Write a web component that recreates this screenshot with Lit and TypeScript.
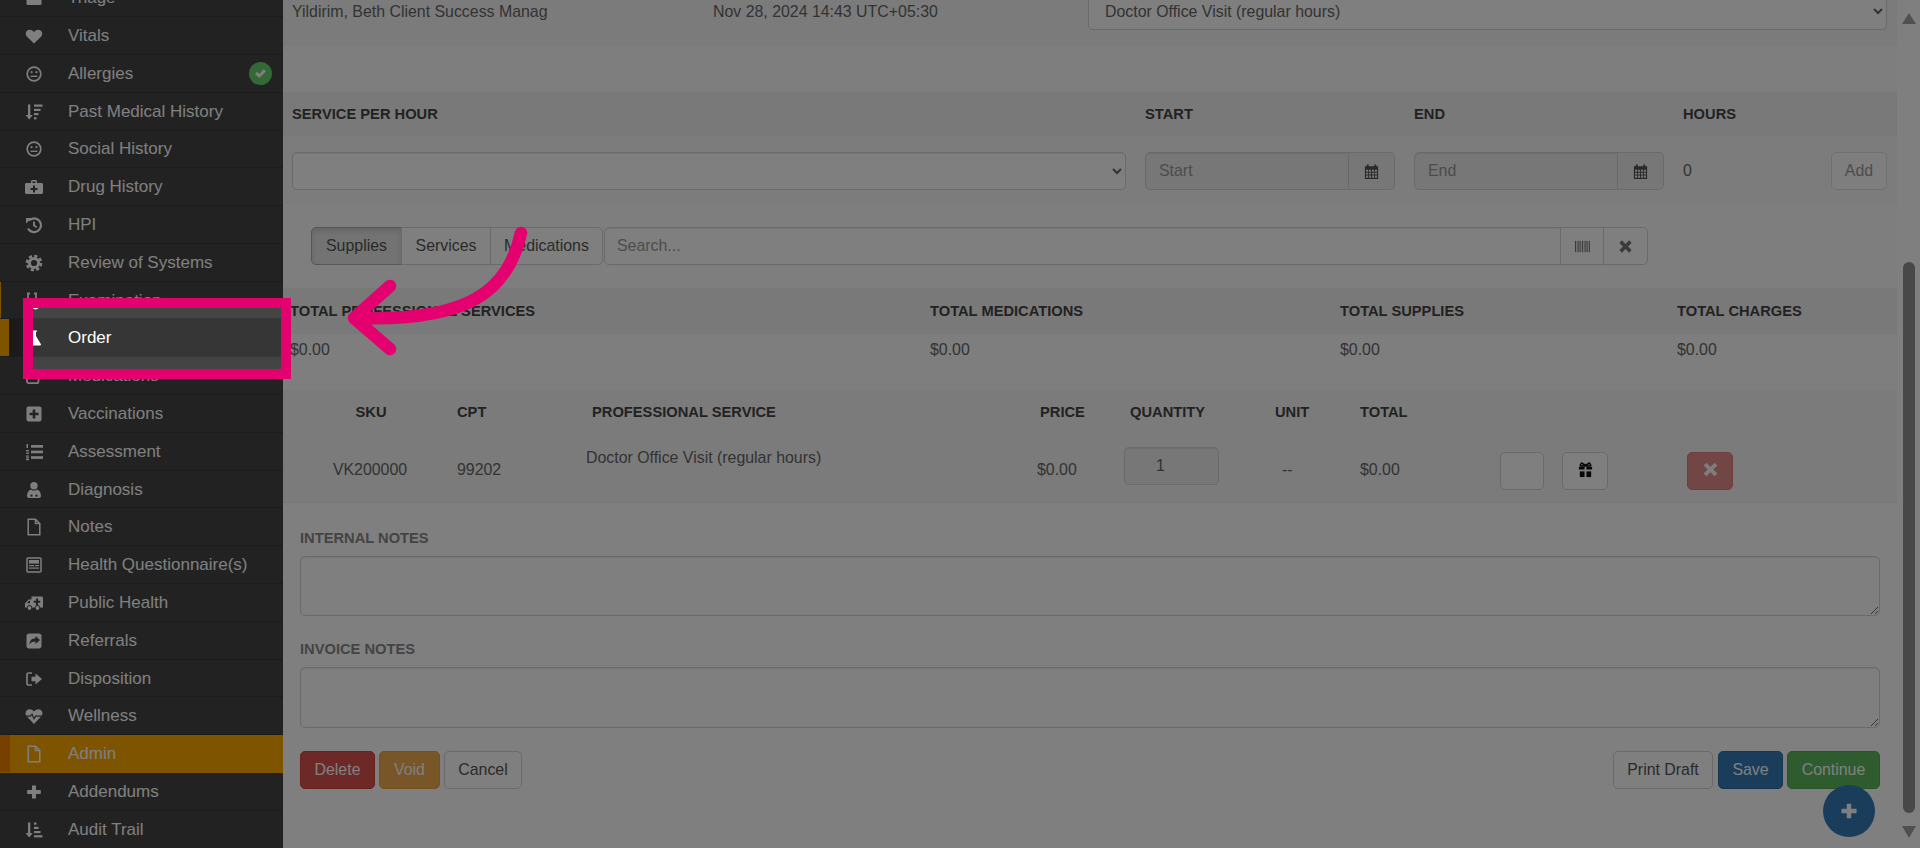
import { LitElement, html, css, svg } from 'lit';
import { customElement } from 'lit/decorators.js';

const ic = (body: unknown, size = 18) =>
    html`<svg class="ic" width="${size}" height="${size}" viewBox="0 0 18 18" fill="currentColor">${body}</svg>`;

const face = svg`<circle cx="9" cy="9" r="6.8" fill="none" stroke="currentColor" stroke-width="1.7"/><circle cx="6.6" cy="7.2" r="1.1"/><circle cx="11.4" cy="7.2" r="1.1"/><rect x="5.6" y="10.6" width="6.8" height="1.4"/>`;
const fileO = svg`<path d="M3.2 1.200h7.300l4.300 4.300v11.300H3.200Z M10.500 1.200v4.300h4.300" fill="none" stroke="currentColor" stroke-width="1.500"/>`;

const icons: Record<string, unknown> = {
    triage: svg`<rect x="1.500" y="4" width="15" height="12" rx="1.500"/>`,
    heart: svg`<path d="M9 16.500 2 9.700C.1 7.800.4 4.900 2.300 3.500 4.200 2.100 6.900 2.600 9 5c2.100-2.400 4.800-2.900 6.700-1.500 1.900 1.400 2.200 4.300.3 6.200Z"/>`,
    face,
    sortDesc: svg`<path d="M3 1.500h2.300v10.500h2.500l-3.600 4.500L.6 12H3Z"/><rect x="9" y="1.500" width="8.500" height="2.200"/><rect x="9" y="5.800" width="6.500" height="2.200"/><rect x="9" y="10" width="4.500" height="2.200"/><rect x="9" y="14.200" width="2.500" height="2.200"/>`,
    medkit: svg`<path fill-rule="evenodd" d="M6 5V3.500C6 2.700 6.700 2 7.500 2h3c.8 0 1.500.7 1.500 1.500V5h4.500c.8 0 1.500.7 1.500 1.500v8c0 .8-.7 1.500-1.500 1.500h-15C.7 16 0 15.300 0 14.500v-8C0 5.700.7 5 1.500 5ZM7.500 3.500V5h3V3.500ZM8 7.500V10H5.500v2H8v2.500h2V12h2.500v-2H10V7.500Z"/>`,
    history: svg`<path d="M4 4.500A6.900 6.900 0 1 1 3 12.500" fill="none" stroke="currentColor" stroke-width="2.200"/><path d="M1 2h5.500L1 7.500Z"/><path d="M9 5.500v4l2.700 1.700" fill="none" stroke="currentColor" stroke-width="1.900"/>`,
    cog: svg`<circle cx="9" cy="9" r="4.600" fill="none" stroke="currentColor" stroke-width="3"/><circle cx="9" cy="9" r="7" fill="none" stroke="currentColor" stroke-width="2.600" stroke-dasharray="3.200 2.300"/>`,
    steth: svg`<path d="M5 1.500H3v6a4 4 0 0 0 8 0v-6H9" fill="none" stroke="currentColor" stroke-width="1.800"/><path d="M7 11.500v1.500a3.500 3.500 0 0 0 7 0V10" fill="none" stroke="currentColor" stroke-width="1.800"/>`,
    flask: svg`<path d="M6 1.500h6v1.300h-1v4.200l4.800 8c.5.8-.1 1.500-.9 1.500H3.100c-.8 0-1.400-.7-.9-1.500L7 7V2.800H6Z"/>`,
    pencil: svg`<path d="M13.500 10v4.500c0 1-.7 1.700-1.700 1.700H3.700c-1 0-1.700-.7-1.700-1.700V6.500c0-1 .7-1.700 1.700-1.700H9" fill="none" stroke="currentColor" stroke-width="1.700"/><path d="M6.500 9 13.500 2l2.500 2.500-7 7H6.500Z"/>`,
    plusSquare: svg`<path fill-rule="evenodd" d="M3.500 1.500h11c1.100 0 2 .9 2 2v11c0 1.100-.9 2-2 2h-11c-1.100 0-2-.9-2-2v-11c0-1.100.9-2 2-2ZM7.700 4.500v3.200H4.500v2.600h3.200v3.200h2.600v-3.200h3.200V7.700h-3.200V4.500Z"/>`,
    listOl: svg`<rect x="6" y="2" width="12" height="2.700"/><rect x="6" y="7.600" width="12" height="2.700"/><rect x="6" y="13.200" width="12" height="2.700"/><rect x="1.500" y="1" width="1.500" height="4"/><rect x="1" y="7" width="3" height="1.300"/><rect x="1" y="9.500" width="3" height="1.300"/><rect x="1" y="12.500" width="3" height="1.200"/><rect x="1" y="14.300" width="3" height="1.200"/><rect x="1" y="16" width="3" height="1.200"/>`,
    userMd: svg`<circle cx="9" cy="4.800" r="3.700"/><path fill-rule="evenodd" d="M2 15c0-3.500 1.700-6 4-6.600 1 .8 2 1.200 3 1.200s2-.4 3-1.200c2.300.6 4 3.100 4 6.600 0 1.300-.9 2-2 2H4c-1.100 0-2-.7-2-2Zm3.300-.4a1.200 1.200 0 1 0 2.400 0 1.200 1.200 0 0 0-2.400 0Zm5 0a1.200 1.200 0 1 0 2.400 0 1.200 1.200 0 0 0-2.400 0Z"/>`,
    fileO,
    news: svg`<rect x="2" y="2" width="14" height="14" rx="1" fill="none" stroke="currentColor" stroke-width="1.500"/><rect x="4" y="4" width="10" height="3.600"/><rect x="4" y="9" width="5" height="1.200"/><rect x="10" y="9" width="4" height="1.200"/><rect x="4" y="11.500" width="10" height="1.200"/>`,
    ambulance: svg`<path fill-rule="evenodd" d="M6.500 2.500h10c.8 0 1.500.7 1.500 1.500v9.500h-3a2.500 2.500 0 0 0-5 0H7a2.500 2.500 0 0 0-5 0H0V9.500L3.500 5.500h3ZM5 6.700H4L1.800 9.300H5ZM11 4.500v2.300H8.700v2H11v2.300h2V8.800h2.300v-2H13V4.500Z"/><circle cx="4.500" cy="14" r="1.900"/><circle cx="12.500" cy="14" r="1.900"/>`,
    share: svg`<path fill-rule="evenodd" d="M4 1.500h10c1.400 0 2.500 1.100 2.500 2.500v10c0 1.400-1.100 2.500-2.500 2.500H4c-1.400 0-2.500-1.100-2.500-2.500V4c0-1.400 1.100-2.500 2.500-2.500ZM10.500 4v2.300c-3.800.2-6 2.400-6 6.700 1-2.400 2.900-3.400 6-3.400V12L15 8Z"/>`,
    signOut: svg`<path d="M7 3H3.700C2.700 3 2 3.700 2 4.700v8.600c0 1 .7 1.700 1.700 1.700H7" fill="none" stroke="currentColor" stroke-width="1.700"/><path d="M6.500 6.800H10.500V3.500L17 9l-6.500 5.500v-3.300h-4Z"/>`,
    heartbeat: svg`<path d="M9 17 1.600 9.300C-.1 7.300.3 4.400 2.200 3 4.200 1.700 6.900 2.100 9 4.600c2.100-2.500 4.800-2.900 6.800-1.600 1.900 1.400 2.300 4.300.6 6.300Z"/><path d="M.5 9.200h5l1.500-2 2 4.500 2-3 1 .5h5.500" fill="none" stroke="#444" stroke-width="1.200"/>`,
    plus: svg`<path d="M7 2.500h4v4.500h4.800v4H11v4.500H7V11H2.200V7H7Z"/>`,
    sortAsc: svg`<path d="M3 1.500h2.300v10.500h2.500l-3.600 4.500L.6 12H3Z"/><rect x="9" y="1.500" width="2.500" height="2.200"/><rect x="9" y="5.800" width="4.500" height="2.200"/><rect x="9" y="10" width="6.500" height="2.200"/><rect x="9" y="14.200" width="8.500" height="2.200"/>`,
    calendar: svg`<path fill-rule="evenodd" d="M2 3.500h2V1.500h2v2h6v-2h2v2h2V17H2ZM3.200 7.200v2h2.300v-2Zm3.200 0v2h2.100v-2Zm3.100 0v2h2.100v-2Zm3 0v2h2.300v-2ZM3.200 10.200v2h2.300v-2Zm3.200 0v2h2.100v-2Zm3.100 0v2h2.100v-2Zm3 0v2h2.300v-2ZM3.200 13.200v2.500h2.300v-2.500Zm3.200 0v2.500h2.100v-2.500Zm3.100 0v2.500h2.100v-2.500Zm3 0v2.500h2.300v-2.500Z"/>`,
    barcode: svg`<rect x="1" y="3" width="1.200" height="12"/><rect x="3" y="3" width=".7" height="12"/><rect x="4.600" y="3" width="1.200" height="12"/><rect x="6.700" y="3" width=".7" height="12"/><rect x="8.300" y="3" width="1.200" height="12"/><rect x="10.400" y="3" width=".7" height="12"/><rect x="12" y="3" width="1.200" height="12"/><rect x="14.100" y="3" width=".7" height="12"/><rect x="15.600" y="3" width="1.200" height="12"/>`,
    times: svg`<path d="M5.200 2.500 9 6.300l3.800-3.800 2.700 2.700L11.700 9l3.800 3.800-2.700 2.700L9 11.700l-3.800 3.800-2.700-2.700L6.300 9 2.500 5.200Z"/>`,
    gift: svg`<path fill-rule="evenodd" d="M2.500 4.500 4.500 1 9 3.500 13.500 1l2 3.500-1 1.500h-11ZM5 3.300 4.400 4.500h2.500ZM13 3.300 11.100 4.500h2.500Z"/><rect x="2" y="6.200" width="6" height="2.800"/><rect x="10" y="6.200" width="6" height="2.800"/><rect x="3" y="11" width="5" height="6"/><rect x="10" y="11" width="5" height="6"/>`,
    check: svg`<path d="M2.500 9.500 5 7l2.500 2.500L13 4l2.500 2.500-8 8Z"/>`,
};

const rows: [string, string, string?][] = [
    ['Triage', 'triage'],
    ['Vitals', 'heart'],
    ['Allergies', 'face'],
    ['Past Medical History', 'sortDesc'],
    ['Social History', 'face'],
    ['Drug History', 'medkit'],
    ['HPI', 'history'],
    ['Review of Systems', 'cog'],
    ['Examination', 'steth', 'trail'],
    ['Order', 'flask', 'current'],
    ['Medications', 'pencil'],
    ['Vaccinations', 'plusSquare'],
    ['Assessment', 'listOl'],
    ['Diagnosis', 'userMd'],
    ['Notes', 'fileO'],
    ['Health Questionnaire(s)', 'news'],
    ['Public Health', 'ambulance'],
    ['Referrals', 'share'],
    ['Disposition', 'signOut'],
    ['Wellness', 'heartbeat'],
    ['Admin', 'fileO', 'admin'],
    ['Addendums', 'plus'],
    ['Audit Trail', 'sortAsc'],
];

@customElement('app-root')
export class AppRoot extends LitElement {
    static styles = css`
        :host {
            display: block;
            position: relative;
            width: 1920px;
            height: 848px;
            overflow: hidden;
            background: #fff;
            color: #666;
            font-family: 'Liberation Sans', Arial, sans-serif;
            font-size: 15.9px;
        }
        * {
            box-sizing: border-box;
        }
        .page {
            display: grid;
            grid-template-columns: 283px 1614px 23px;
            height: 848px;
        }

        .sidebar {
            background: #444;
            color: #fff;
            overflow: hidden;
            font-size: 17px;
        }
        .nav {
            margin-top: -20.7px;
        }
        .nav-row {
            display: flex;
            align-items: center;
            gap: 25px;
            height: 37.8px;
            padding: 1px 0 0 25px;
            border-bottom: 1px solid #383838;
            position: relative;
        }
        .nav-row.trail {
            box-shadow: inset 1px 0 0 #ffa800;
        }
        .nav-row.current {
            background: #363636;
            box-shadow: inset 9px 0 0 #ffa800;
        }
        .nav-row.admin {
            background: #ffa800;
            box-shadow: inset 10px 0 0 #f08000;
            border-bottom-color: #ffa800;
        }
        .ic {
            flex: none;
            display: block;
        }
        .ic-up {
            display: block;
            margin-bottom: 4px;
        }
        .badge {
            position: absolute;
            left: 249px;
            top: 7px;
            width: 23px;
            height: 23px;
            border-radius: 50%;
            background: #6ad06e;
            color: #fff;
            display: flex;
            align-items: center;
            justify-content: center;
        }

        main {
            overflow: hidden;
        }
        .head {
            font-weight: 700;
            font-size: 14.7px;
            color: #444;
        }
        .visit {
            display: grid;
            grid-template-columns: 421px 375px 799px;
            align-items: start;
            line-height: 40px;
            height: 54px;
            margin-top: -8px;
            padding-left: 9px;
            background: #f7f7f7;
        }
        .gap {
            height: 46px;
            background: #fcfcfc;
        }
        .cols {
            display: grid;
            grid-template-columns: 853px 269px 269px 148px 56px;
            padding-left: 9px;
            align-items: center;
        }
        .cols.head {
            height: 44px;
            background: #f3f3f3;
        }
        .cols.fields {
            height: 68px;
            padding-top: 2px;
            background: #f9f9f9;
        }
        select,
        input,
        textarea,
        .btn {
            font: inherit;
            color: inherit;
            border: 1px solid #d4d4d4;
            border-radius: 5px;
            background: #fff;
        }
        select {
            width: 100%;
            height: 38px;
            padding: 0 12px;
            box-shadow: inset 0 1px 1px rgba(0, 0, 0, 0.075);
        }
        input {
            height: 38px;
            padding: 0 13px;
            box-shadow: inset 0 1px 1px rgba(0, 0, 0, 0.075);
            outline: none;
        }
        input::placeholder {
            color: #999;
        }
        input:disabled {
            background: #eee;
        }
        .group {
            display: flex;
            width: 250px;
        }
        .group input {
            flex: 1;
            min-width: 0;
            border-radius: 5px 0 0 5px;
        }
        .addon {
            flex: none;
            width: 46px;
            height: 38px;
            border: 1px solid #d4d4d4;
            border-left: none;
            border-radius: 0 5px 5px 0;
            background: #eee;
            color: #555;
            display: flex;
            align-items: center;
            justify-content: center;
        }
        .btn {
            height: 38px;
            display: flex;
            align-items: center;
            justify-content: center;
            padding: 0;
        }
        .btn.faded {
            opacity: 0.65;
        }
        .tools {
            display: flex;
            align-items: center;
            height: 84px;
            padding-left: 28px;
            background: #fdfdfd;
        }
        .tools .btn {
            border-radius: 0;
            margin-left: -1px;
            color: #555;
        }
        .tools .btn.first {
            border-radius: 5px 0 0 5px;
            margin-left: 0;
            background: #e6e6e6;
            border-color: #adadad;
            box-shadow: inset 0 3px 5px rgba(0, 0, 0, 0.125);
        }
        .tools .btn.last {
            border-radius: 0 5px 5px 0;
            margin-right: 1px;
        }
        .tools .btn.end {
            border-radius: 0 5px 5px 0;
        }
        .tools .btn.mute {
            color: #777;
        }
        .tools input {
            width: 957px;
            padding-left: 12px;
            border-radius: 5px 0 0 5px;
        }
        .totals {
            display: grid;
            grid-template-columns: 640px 410px 337px 1fr;
            padding-left: 7px;
            align-items: center;
        }
        .totals.head {
            height: 46px;
            background: #f3f3f3;
        }
        .totals.vals {
            height: 56px;
            padding-bottom: 25px;
            background: #fcfcfc;
        }
        .table {
            background: #f7f7f7;
            border-bottom: 1px solid #ececec;
        }
        .t-row {
            display: grid;
            grid-template-columns: 174px 129px 451px 87px 151px 85px 140px 62px 125px 1fr;
            align-items: center;
        }
        .t-row.head {
            height: 44px;
        }
        .t-row.body {
            height: 68px;
        }
        .sku {
            text-align: center;
        }
        .t-row.head .sku {
            padding-left: 2px;
        }
        .svc-h {
            padding-left: 6px;
        }
        .qty-h {
            padding-left: 6px;
        }
        .price-h {
            padding-left: 3px;
        }
        .svc {
            align-self: start;
            margin-top: 15px;
        }
        .t-row.body > span {
            position: relative;
            top: 2px;
        }
        .t-row.body > .svc {
            top: 0;
        }
        .unit {
            padding-left: 7px;
        }
        .qty {
            width: 95px;
            text-align: center;
            padding: 0 22px 0 0;
            margin-top: -4px;
        }
        .tbtn {
            height: 38px;
            margin-top: 6px;
        }
        .danger {
            background: #d9534f;
            border-color: #d43f3a;
            color: #fff;
        }
        .notes {
            padding: 25px 17px 0 17px;
        }
        .notes label {
            display: block;
            height: 20px;
            line-height: 20px;
            margin-bottom: 8px;
            font-weight: 700;
            font-size: 14.7px;
            color: #888;
        }
        textarea {
            display: block;
            width: 100%;
            height: 60px;
            margin-bottom: 23px;
            box-shadow: inset 0 1px 1px rgba(0, 0, 0, 0.075);
        }
        textarea.low {
            height: 61px;
        }
        .actions {
            display: flex;
            justify-content: space-between;
        }
        .actions > div {
            display: flex;
            gap: 4px;
        }
        .actions .btn {
            background: #fff;
            color: #555;
        }
        .actions .red {
            background: #d9534f;
            border-color: #d43f3a;
            color: #fff;
        }
        .actions .amber {
            background: #f0ad4e;
            border-color: #eea236;
            color: #fff;
        }
        .actions .blue {
            background: #337ab7;
            border-color: #2e6da4;
            color: #fff;
        }
        .actions .green {
            background: #5cb85c;
            border-color: #4cae4c;
            color: #fff;
        }

        .scroll {
            background: #fff;
            display: flex;
            flex-direction: column;
            align-items: center;
            padding: 13px 0 0 1px;
            color: #a0a0a0;
        }
        .thumb {
            width: 12px;
            height: 551px;
            margin: 238px 0 13px;
            border-radius: 6px;
            background: #909090;
        }

        .fab {
            position: absolute;
            left: 1823px;
            top: 785px;
            width: 52px;
            height: 52px;
            border-radius: 50%;
            background: #337ab7;
            color: #fff;
            display: flex;
            align-items: center;
            justify-content: center;
        }
        .spot {
            position: absolute;
            left: 23px;
            top: 298px;
            width: 268px;
            height: 81px;
            border: 10px solid #e5006f;
            box-shadow: 0 0 0 2200px rgba(0, 0, 0, 0.5);
        }
        .arrow {
            position: absolute;
            left: 0;
            top: 0;
            pointer-events: none;
        }
    `;

    render() {
        return html`
            <div class="page">
                <nav class="sidebar">
                    <div class="nav">
                        ${rows.map(
                            ([label, icon, kind]) => html`
                                <div class="nav-row ${kind ?? ''}">
                                    ${ic(icons[icon])}<span>${label}</span>
                                    ${label === 'Allergies'
                                        ? html`<span class="badge">${ic(icons.check, 15)}</span>`
                                        : ''}
                                </div>
                            `,
                        )}
                    </div>
                </nav>
                <main>
                    <div class="visit">
                        <span>Yildirim, Beth Client Success Manag</span>
                        <span>Nov 28, 2024 14:43 UTC+05:30</span>
                        <select><option>Doctor Office Visit (regular hours)</option></select>
                    </div>
                    <div class="gap"></div>
                    <div class="cols head">
                        <span>SERVICE PER HOUR</span><span>START</span><span>END</span><span>HOURS</span>
                    </div>
                    <div class="cols fields">
                        <select style="width:834px"><option></option></select>
                        <div class="group">
                            <input disabled placeholder="Start" />
                            <span class="addon">${ic(icons.calendar, 17)}</span>
                        </div>
                        <div class="group">
                            <input disabled placeholder="End" />
                            <span class="addon">${ic(icons.calendar, 17)}</span>
                        </div>
                        <span>0</span>
                        <button class="btn faded">Add</button>
                    </div>
                    <div class="tools">
                        <button class="btn first" style="width:91px">Supplies</button>
                        <button class="btn" style="width:90px">Services</button>
                        <button class="btn last" style="width:113px">Medications</button>
                        <input placeholder="Search..." />
                        <button class="btn mute" style="width:44px">${ic(icons.barcode, 17)}</button>
                        <button class="btn end mute" style="width:45px">${ic(icons.times, 17)}</button>
                    </div>
                    <div class="totals head">
                        <span>TOTAL PROFESSIONAL SERVICES</span><span>TOTAL MEDICATIONS</span>
                        <span>TOTAL SUPPLIES</span><span>TOTAL CHARGES</span>
                    </div>
                    <div class="totals vals">
                        <span>$0.00</span><span>$0.00</span><span>$0.00</span><span>$0.00</span>
                    </div>
                    <div class="table">
                        <div class="t-row head">
                            <span class="sku">SKU</span><span>CPT</span>
                            <span class="svc-h">PROFESSIONAL SERVICE</span>
                            <span class="price-h">PRICE</span><span class="qty-h">QUANTITY</span>
                            <span>UNIT</span><span>TOTAL</span>
                        </div>
                        <div class="t-row body">
                            <span class="sku">VK200000</span><span>99202</span>
                            <span class="svc">Doctor Office Visit (regular hours)</span>
                            <span>$0.00</span>
                            <input class="qty" disabled value="1" />
                            <span class="unit">--</span><span>$0.00</span>
                            <button class="btn tbtn" style="width:44px"></button>
                            <button class="btn tbtn" style="width:46px;color:#111">
                                <span class="ic-up">${ic(icons.gift, 17)}</span>
                            </button>
                            <button class="btn tbtn faded danger" style="width:46px">
                                <span class="ic-up">${ic(icons.times, 19)}</span>
                            </button>
                        </div>
                    </div>
                    <div class="notes">
                        <label>INTERNAL NOTES</label>
                        <textarea></textarea>
                        <label>INVOICE NOTES</label>
                        <textarea class="low"></textarea>
                        <div class="actions">
                            <div>
                                <button class="btn red" style="width:75px">Delete</button>
                                <button class="btn amber" style="width:61px">Void</button>
                                <button class="btn" style="width:78px">Cancel</button>
                            </div>
                            <div>
                                <button class="btn" style="width:100px;margin-right:1px">Print Draft</button>
                                <button class="btn blue" style="width:65px">Save</button>
                                <button class="btn green" style="width:93px">Continue</button>
                            </div>
                        </div>
                    </div>
                </main>
                <div class="scroll">
                    <svg width="14" height="11" viewBox="0 0 14 11" fill="currentColor"><path d="M7 0 14 11H0Z" /></svg>
                    <div class="thumb"></div>
                    <svg width="14" height="12" viewBox="0 0 14 12" fill="currentColor"><path d="M0 0H14L7 12Z" /></svg>
                </div>
            </div>
            <div class="fab">${ic(icons.plus, 20)}</div>
            <div class="spot"></div>
            <svg class="arrow" width="1920" height="848" fill="none" stroke="#e5006f" stroke-width="12.500" stroke-linecap="round" stroke-linejoin="round">
                <path d="M521 233C508 290 470 322 356 318" />
                <path d="M390 286 354 318 390 349" />
            </svg>
        `;
    }
}
